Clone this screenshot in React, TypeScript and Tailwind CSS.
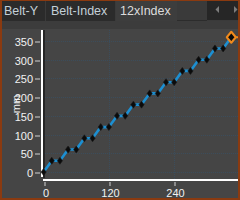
import React from 'react';

const X = (v: number) => 43.6 + v * 0.544;
const Y = (v: number) => 172 - v * 0.3743;

const points: [number, number][] = [[0, 0]];
for (let k = 0; k <= 10; k++) {
  points.push([15 + 30 * k, 30 * (k + 1)], [30 + 30 * k, 30 * (k + 1)]);
}
points.push([345, 360]);

const yTicks = [0, 50, 100, 150, 200, 250, 300, 350];
const xTicks = [0, 120, 240];

const Diamond = ({ x, y }: { x: number; y: number }) => (
  <polygon points={`${x},${y - 3.5} ${x + 2.6},${y} ${x},${y + 3.5} ${x - 2.6},${y}`} fill="#0b0b0b" stroke="#1a1a1a" strokeWidth={0.6} />
);

const Chart = () => {
  const line = points.map(([a, b]) => `${X(a).toFixed(1)},${Y(b).toFixed(1)}`).join(' ');
  const last = points[points.length - 1];
  const lx = X(last[0]);
  const ly = Y(last[1]);
  return (
    <svg width={236} height={177} viewBox="2 21 236 177" className="block" style={{ fontFamily: "'Liberation Sans', Arial, sans-serif" }}>
      <rect x={2} y={21} width={236} height={8} fill="#3c3c3c" />
      <rect x={2} y={29} width={236} height={169} fill="#454545" />

      {/* grid */}
      {yTicks.map((v) => (
        <line key={v} x1={45} x2={238} y1={Math.round(Y(v)) + 0.5} y2={Math.round(Y(v)) + 0.5} stroke="#3b4d5c" strokeDasharray="1 1" />
      ))}
      {xTicks.slice(1).map((v) => (
        <line key={v} x1={Math.round(X(v)) + 0.5} x2={Math.round(X(v)) + 0.5} y1={30} y2={179} stroke="#3b4d5c" strokeDasharray="1 1" />
      ))}

      {/* axes */}
      <rect x={43} y={30} width={2} height={148} fill="#252525" />
      <rect x={41} y={30} width={2} height={147} fill="#ffffff" />
      <rect x={43} y={179} width={195} height={2} fill="#ffffff" />

      {/* y ticks + labels */}
      {yTicks.map((v) => (
        <g key={v}>
          <rect x={35} y={Math.round(Y(v))} width={5} height={2} fill="#8c8c8c" />
          <text x={33} y={Math.round(Y(v)) + 5} fontSize={11} fill="#f2f2f2" textAnchor="end">{v}</text>
        </g>
      ))}
      <text transform="translate(19.5,104) rotate(-90)" fontSize={11} fill="#f2f2f2" textAnchor="middle">mm</text>

      {/* x ticks + labels */}
      {xTicks.map((v) => (
        <g key={v}>
          <rect x={Math.round(X(v))} y={182} width={2} height={4} fill="#8c8c8c" />
          <text x={Math.round(X(v)) + (v === 0 ? 2 : 1.5)} y={197} fontSize={11} fill="#f2f2f2" textAnchor="middle">{v}</text>
        </g>
      ))}

      {/* data */}
      <line x1={lx} x2={238} y1={ly} y2={ly} stroke="#f08a1c" strokeWidth={2} />
      <polyline points={line} fill="none" stroke="#1c8fd2" strokeWidth={2.6} strokeLinejoin="round" />
      {points.slice(0, -1).map(([a, b], i) => (
        <Diamond key={i} x={X(a)} y={Y(b)} />
      ))}
      <polygon points={`${lx},${ly - 5.5} ${lx + 4.5},${ly} ${lx},${ly + 5.5} ${lx - 4.5},${ly}`} fill="#0b0b0b" stroke="#f08a1c" strokeWidth={2} strokeLinejoin="round" />
    </svg>
  );
};

export default function App() {
  return (
    <div className="w-[240px] h-[200px] flex flex-col border-2 border-t border-[#8a3a10] bg-[#3c3c3c] font-['Liberation_Sans',Arial,sans-serif] overflow-hidden">
      <div className="h-[20px] flex bg-[#3a3a3a] text-[12.5px] leading-none">
        <div className="w-[43px] bg-[#2b2b2b] text-[#c4d0d8] pl-[2px] flex items-center">Belt-Y</div>
        <div className="w-[69px] ml-[1px] bg-[#2b2b2b] text-[#c4d0d8] pl-[5px] flex items-center">Belt-Index</div>
        <div className="w-[61px] ml-[1px] bg-[#3d3d3d] text-[#dcdcdc] pl-[4px] flex items-center">12xIndex</div>
        <div className="flex-1 border-b border-[#2c2c2c]" />
        <div className="w-[31px] h-[19px] bg-[#262626]">
          <svg width={31} height={19} viewBox="0 0 31 19">
            <polygon points="12,5 12,12 8.5,8.5" fill="#7c7c7c" />
            <polygon points="27,5 27,12 30.5,8.5" fill="#7c7c7c" />
          </svg>
        </div>
      </div>
      <Chart />
    </div>
  );
}
